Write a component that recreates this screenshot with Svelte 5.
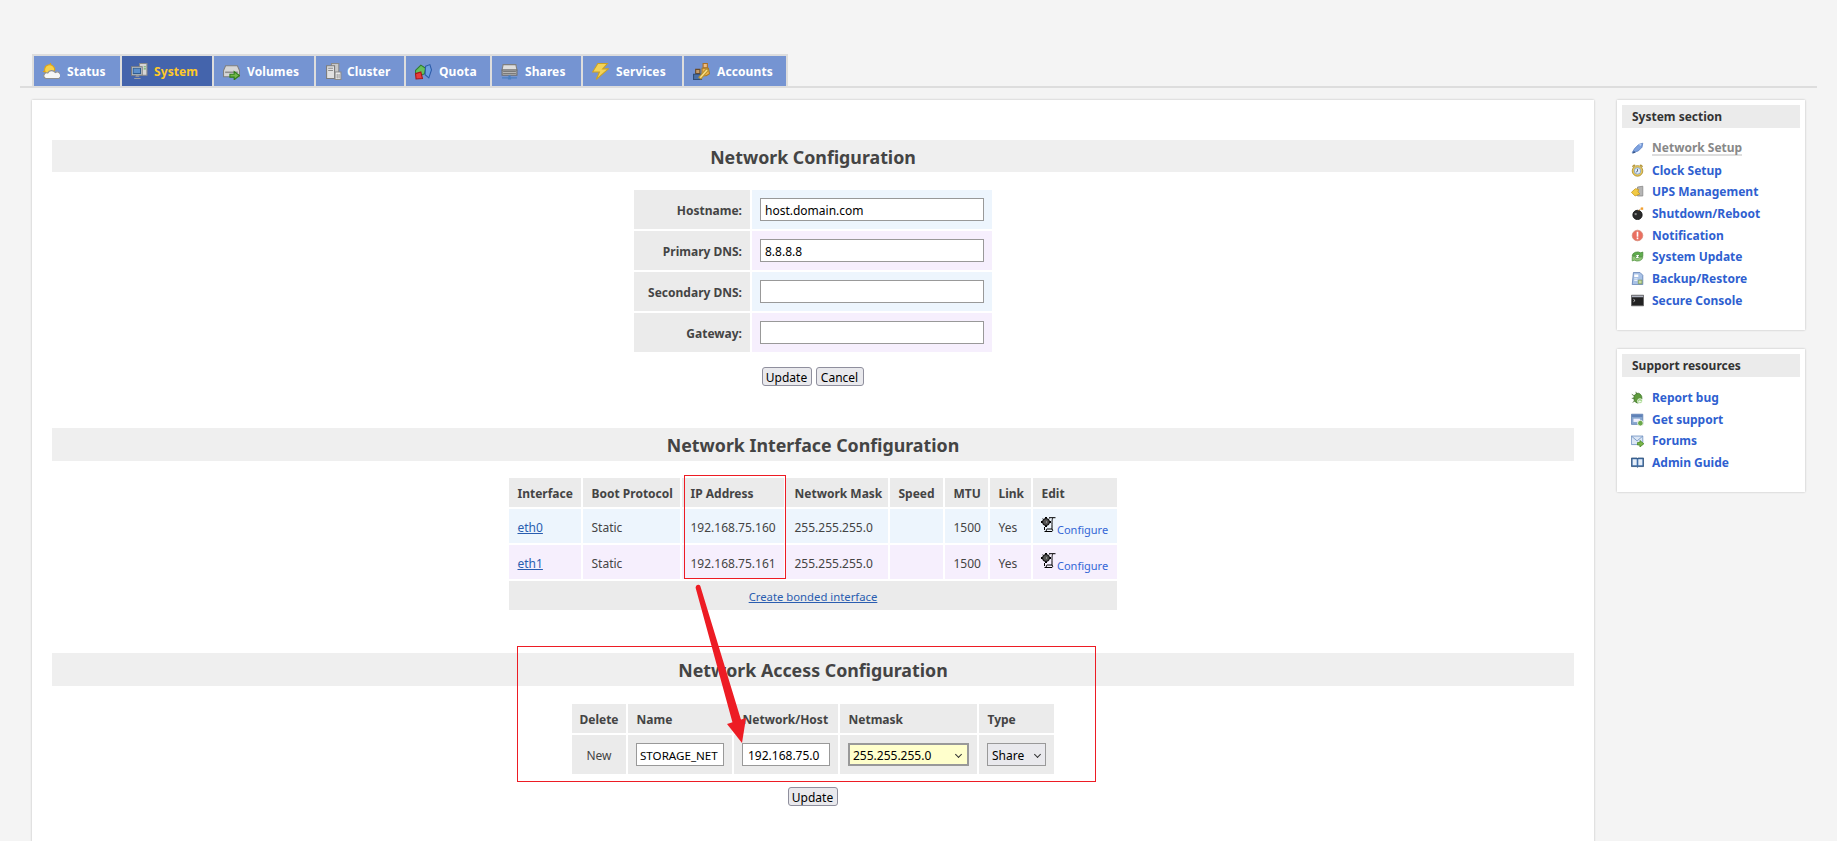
<script>
  const tabs = [
    { n: 'Status', w: 86, g: 7, i: 'status' }, { n: 'System', w: 90, g: 6, i: 'system', on: true },
    { n: 'Volumes', w: 100, g: 7, i: 'volumes' }, { n: 'Cluster', w: 88, g: 5, i: 'cluster' },
    { n: 'Quota', w: 84, g: 7, i: 'quota' }, { n: 'Shares', w: 89, g: 7, i: 'shares' },
    { n: 'Services', w: 99, g: 7, i: 'services' }, { n: 'Accounts', w: 102, g: 7, i: 'accounts' }
  ];
  const sys = [
    ['Network Setup', 'wrench'], ['Clock Setup', 'clock'], ['UPS Management', 'ups'], ['Shutdown/Reboot', 'bomb'],
    ['Notification', 'alert'], ['System Update', 'update'], ['Backup/Restore', 'backup'], ['Secure Console', 'console']
  ];
  const sup = [['Report bug', 'bug'], ['Get support', 'support'], ['Forums', 'forums'], ['Admin Guide', 'guide']];
  const form = [['Hostname:', 'host.domain.com'], ['Primary DNS:', '8.8.8.8'], ['Secondary DNS:', ''], ['Gateway:', '']];
  const heads = ['Interface', 'Boot Protocol', 'IP Address', 'Network Mask', 'Speed', 'MTU', 'Link', 'Edit'];
  const ifaces = [['eth0', '192.168.75.160'], ['eth1', '192.168.75.161']];
  const I = {
    status: [['M2 3l2 2M7 0v3M0 8h3', 'none', '#e0a010'], ['M3 10a4.8 4.8 0 1 1 8-3l-4 4z', '#f8d24a', '#dca318'], ['M2.5 14.5a2.6 2.6 0 0 1 2-5 4 4 0 0 1 7-.5 2.9 2.9 0 0 1 3.5 5.5z', '#f6f6f6', '#8f8f8f']],
    system: [['M8 .5h7v11H8z', '#d6d6d6', '#8a8a8a'], ['M.5 3.5h10v8H.5z', '#e5e5e5', '#7a7a7a'], ['M2 5h7v5H2z', '#5c8fcc', '#2f5c90'], ['M4 13h4l-1-1.5H5zM3 14h6v1H3z', '#a0a0a0', 'none'], ['M12 3h2v1h-2zM12 5h2v1h-2z', '#6ab56a', 'none']],
    volumes: [['M.5 7l2-4.5h11l2 4.5v6H.5z', '#d6d6d6', '#7f7f7f'], ['M2 8h12v1.5H2z', '#8f8f8f', 'none'], ['M6.5 10.5h4V8l5 3.8-5 4v-2.5h-4z', '#74b84a', '#2e7d1a']],
    cluster: [['M6 .5h7v11H6z', '#c8c8c8', '#8a8a8a'], ['M1.5 2.5h7.5v12H1.5z', '#e0e0e0', '#7a7a7a'], ['M3 4.5h4.5v1H3zM3 6.5h4.5v1H3z', '#8c8c8c', 'none'], ['M9.5 8.5h5.5v7H9.5z', '#f5f5f5', '#8a8a8a'], ['M11 10h.8v4.5H11zM12.8 10h.8v4.5h-.8z', '#777', 'none']],
    quota: [['M.5 7l5-5 4.5 3-1 5-4 2-4.5-1z', '#66bf5c', '#2f7a2f'], ['M.5 10l5-1.5 1.5 6-6 .5z', '#e83b3b', '#a61515'], ['M10 3l4-1.5 1.5 5-2.5 7.5-3.5-3z', '#6c9fe2', '#2c5ba8']],
    shares: [['M2 1.5h12l1 5H1z', '#dedede', '#7f7f7f'], ['M1 6.5h14v5H1z', '#b5b5b5', '#6e6e6e'], ['M2 8h12M2 9.8h12', 'none', '#7a7a7a'], ['M7 11.5h2v2h6v1H9.5v1h-3v-1H1v-1h6z', '#4a7fc0', 'none']],
    services: [['M5.5.5h9L10 5.5h5.5L4 15.5l3-7H.5z', '#f4d357', '#cba122']],
    accounts: [['M9.5.5h4v4h-4z', '#f0bd80', '#a96f24'], ['M8.5 5h6l1 5-3 2h-4z', '#f0b44f', '#a97a20'], ['M2.5 6h4v4h-4z', '#c49a6a', '#6b4a26'], ['M.5 10.5h7.5v5H.5z', '#4a6fa6', '#2f4d78'], ['M5.5 13.5l7-8 2 1.5-7 8z', '#f7dd86', '#b8922f']],
    wrench: [['M1.5 13l3-5 5-5 5-1.5-1 5-4.5 4.5z', '#7ea2e0', '#5a7fc0'], ['M1.5 14.5l2-3.5 2.5 2z', '#36558a', 'none'], ['M9 3l4-1-1 3z', '#b9cff2', 'none']],
    clock: [['M2 3.5a2 2 0 0 1 3-2zM14 3.5a2 2 0 0 0-3-2z', '#d9a820', '#a98a2e'], ['M8 2a6.5 6.5 0 1 1 0 13 6.5 6.5 0 0 1 0-13z', '#e8c85a', '#a98a2e'], ['M8 4.5a4 4 0 1 1 0 8 4 4 0 0 1 0-8z', '#dfeafa', '#7a9fc8'], ['M8 6v3l-2 1', 'none', '#456']],
    ups: [['M8 2.5l6.5-1v12H8z', '#b5b5b5', '#8a8a8a'], ['M.5 9l5-4.5 4 1-1 3 2.5 2.5-6 2.5z', '#f2ca44', '#c89a20']],
    bomb: [['M8 4a5.7 5.7 0 1 1 0 11.5A5.7 5.7 0 0 1 8 4z', '#2a2a2a', '#111'], ['M9 5l3-3', 'none', '#c83'], ['M12 .5h3v3h-3z', '#f3a030', 'none'], ['M4.5 7.5H7V10H4.5z', '#8a8a8a', 'none']],
    alert: [['M8 1.5a6.5 6.5 0 1 1 0 13 6.5 6.5 0 0 1 0-13z', '#ea6f60', '#d88a78'], ['M7 3.5h2v6H7zM7 10.5h2v2H7z', '#fff', 'none']],
    update: [['M1.5 7a6.5 5 0 0 1 10.5-3.5l2.5-1V8H9l2-1.7a3.5 3 0 0 0-5.7 1z', '#5fae4d', '#4a8a3a'], ['M14.5 9A6.5 5 0 0 1 4 12.5l-2.5 1V8H7L5 9.7a3.5 3 0 0 0 5.7-1z', '#93c678', '#5a9a4a']],
    backup: [['M3 .5h8L14.500 4v11.500h-13z', '#a9c2e6', '#5f7fb5'], ['M4 3h5v3H4zM4 8h4v1H4zM4 10h4v1H4z', '#fff', 'none'], ['M9 10h4.500v4.500H9z', '#c6dc9f', '#7f9a5a']],
    console: [['M.5 1.500h15v13H.5z', '#222', '#666'], ['M1 2h14v2H1z', '#b0b4c0', 'none'], ['M3 6.500l2 1.500-2 1.500', 'none', '#ddd']],
    bug: [['M7 3a5 6 0 1 1-1 11 5 6 0 0 1 1-11z', '#5f9a3c', '#3f7a2c'], ['M1 4l3 2M1 9h3M2 14l3-2M6 1l1 3', 'none', '#476c2c'], ['M11 9.500a3 3 0 1 1 .1 6 3 3 0 0 1-.1-6z', '#8c6', '#fff'], ['M10.500 11h1v1.500H13v1h-1.500V15h-1v-1.500H9v-1h1.500z', '#fff', 'none']],
    support: [['M.5 1.500h14V14H.5z', '#8aa8d0', '#5f7fb0'], ['M1 2h13v3H1z', '#5f82b8', 'none'], ['M3 7h8v4H3z', '#eef', 'none'], ['M11.500 9a3.500 3.500 0 1 1 .1 7 3.500 3.500 0 0 1-.1-7z', '#6ba84a', '#fff']],
    forums: [['M.5 2.500h14V13H.5z', '#dbe6f5', '#6e90c0'], ['M.5 2.500l7 6 7-6', 'none', '#6e90c0'], ['M8 10.500h3V8l4.800 4-4.800 4v-2.500H8z', '#7ab648', '#4b8a2a']],
    guide: [['M.5 2.500h7l.5 1 .5-1h7V13H9l-1 1-1-1H.5z', '#3f6ea8', '#2f4f78'], ['M2 4h5v7.500H2zM9 4h5v7.500H9z', '#e6eef8', 'none']],
    config: [['M5 1.500a3.500 3.500 0 1 1 0 7 3.500 3.500 0 0 1 0-7z', '#555', '#000'], ['M4 0h2v1.500H4zM0 4h1.500v2H0zM8.500 4H10v2H8.500zM4 8.500h2V10H4zM1 1l1.500 1L2 2.500zM9 1L7.500 2 8 2.500z', '#000', 'none'], ['M5 4.500h1v1H5z', '#ccc', 'none'], ['M8 .7h6.500M12 .7C11 2 11 4 11 9v3.500M3.500 10v3M3.500 14.500h7.500a1.500 1.500 0 0 0 0-2.500H6c-1 0-1 2.500 0 2.500', 'none', '#000']]
  };
</script>

{#snippet icon(name, cls)}
  <svg class={cls} viewBox="0 0 16 16" aria-hidden="true">
    {#each I[name] as p}
      <path d={p[0]} fill={p[1]} stroke={p[2]} stroke-width="1" />
    {/each}
  </svg>
{/snippet}

<div class="page">
  <nav class="tabs">
    {#each tabs as t}
      <a class="tab" class:on={t.on} href="#t" style:width="{t.w}px" style:gap="{t.g}px">
        {@render icon(t.i, 'ti')}<span>{t.n}</span>
      </a>
    {/each}
  </nav>
  <div class="rule"></div>

  <div class="layout">
    <main class="panel">
      <section class="s1">
        <h2>Network Configuration</h2>
        <table class="t form">
          <tbody>
            {#each form as r, i}
              <tr class={i % 2 ? 'odd' : 'even'}>
                <th>{r[0]}</th>
                <td><input class="box wide" value={r[1]} /></td>
              </tr>
            {/each}
          </tbody>
        </table>
        <div class="btns"><button>Update</button><button class="cancel">Cancel</button></div>
      </section>

      <section class="s2">
        <h2>Network Interface Configuration</h2>
        <table class="t ifs">
          <thead><tr>{#each heads as h}<th>{h}</th>{/each}</tr></thead>
          <tbody>
            {#each ifaces as r, i}
              <tr class={i % 2 ? 'odd' : 'even'}>
                <td><a href="#e">{r[0]}</a></td>
                <td>Static</td>
                <td>{r[1]}</td>
                <td>255.255.255.0</td>
                <td></td>
                <td>1500</td>
                <td>Yes</td>
                <td class="edit">{@render icon('config', 'ci')}<a class="plain" href="#c">Configure</a></td>
              </tr>
            {/each}
            <tr class="foot"><td colspan="8"><a href="#b">Create bonded interface</a></td></tr>
          </tbody>
        </table>
      </section>

      <section class="s3">
        <h2>Network Access Configuration</h2>
        <table class="t acc">
          <thead><tr><th class="ctr">Delete</th><th>Name</th><th>Network/Host</th><th>Netmask</th><th>Type</th></tr></thead>
          <tbody>
            <tr>
              <td class="ctr">New</td>
              <td><input class="box w88 nm" value="STORAGE_NET" /></td>
              <td><input class="box w88 pad" value="192.168.75.0" /></td>
              <td><span class="sel mask">255.255.255.0<i class="chev"></i></span></td>
              <td><span class="sel type">Share<i class="chev"></i></span></td>
            </tr>
          </tbody>
        </table>
        <div class="btns b3"><button>Update</button></div>
      </section>
    </main>

    <aside class="side">
      <div class="card c1">
        <h3>System section</h3>
        <ul>
          {#each sys as l, i}
            <li>{@render icon(l[1], 'si')}<a href="#s" class:cur={i === 0}>{l[0]}</a></li>
          {/each}
        </ul>
      </div>
      <div class="card c2">
        <h3>Support resources</h3>
        <ul>
          {#each sup as l}
            <li>{@render icon(l[1], 'si')}<a href="#s">{l[0]}</a></li>
          {/each}
        </ul>
      </div>
    </aside>
  </div>

  <div class="mark m1"></div>
  <div class="mark m2"></div>
  <svg class="arrow" viewBox="0 0 1837 841" aria-hidden="true">
    <path d="M695.600 587.700 Q696 584.500 698.500 584.700 Q700.300 585 700.400 586.300 L741.300 720.700 L732.700 723.300 Z" fill="#ed1c24" />
    <path d="M742 743 L727 724 L746 718 Z" fill="#ed1c24" />
  </svg>
</div>

<style>
  :global(body) { margin: 0; background: #f4f4f4; }
  .page {
    position: relative; height: 841px; overflow: hidden; padding-top: 54px; box-sizing: border-box;
    font: 12px "Noto Sans", "Open Sans", sans-serif; color: #444;
  }
  .tabs { display: flex; gap: 2px; width: fit-content; margin-left: 32px; padding: 2px 2px 0; background: #ddd; }
  .tab {
    display: flex; align-items: center; box-sizing: border-box; height: 30px; padding-left: 9px;
    background: #7594d2; color: #fff; font-weight: 700; letter-spacing: .1px; text-decoration: none; white-space: nowrap;
  }
  .tab.on { background: #4464ac; color: #ffc929; }
  .ti { width: 17px; height: 17px; flex: none; }
  .rule { height: 2px; background: #ddd; margin: 0 20px; }
  .layout { display: flex; align-items: flex-start; padding: 12px 0 0 32px; }
  .panel {
    width: 1562px; box-sizing: border-box; min-height: 800px; padding: 40px 20px 0; background: #fff;
    box-shadow: 0 0 2px #bbb;
  }
  h2 {
    margin: 0; height: 32px; line-height: 34px; text-align: center; background: #efefef; color: #444;
    font-size: 17.8px; font-weight: 700;
  }
  .s2 h2, .s3 h2 { height: 33px; }
  .t { border-collapse: separate; border-spacing: 2px; margin: 0 auto; table-layout: fixed; }
  .t th, .t td { box-sizing: border-box; padding: 0; }
  .t th { background: #ebebeb; font-weight: 700; text-align: left; padding: 2px 0 0 8.5px; }
  .even td { background: #edf5fd; }
  .odd td { background: #f6effd; }
  .form { margin-top: 16px; }
  .form th { width: 116px; height: 39px; text-align: right; padding: 1px 8px 0 0; }
  .form td { width: 240px; padding-left: 8px; }
  .box {
    display: block; box-sizing: border-box; height: 23px; border: 1px solid #999; border-radius: 0; padding: 1px 4px 0;
    background: #fff; color: #000; font: 12px "Noto Sans", sans-serif; outline: none;
  }
  .wide { width: 224px; }
  .w88 { width: 88px; }
  .nm { padding: 1px 2px 0 3px; font-size: 11.6px; }
  .pad { padding-left: 5px; }
  .btns { display: flex; justify-content: center; gap: 4px; margin-top: 13px; padding-right: 1px; }
  button {
    box-sizing: border-box; width: 50px; height: 19px; padding: 1px 0 0; border: 1px solid #8f8f9d; border-radius: 3px;
    background: #e9e9ed; color: #000; font: 12px "Noto Sans", sans-serif;
  }
  .cancel { width: 48px; }
  .s2 { margin-top: 42px; }
  .ifs { margin-top: 15px; }
  .ifs th { height: 29px; }
  .ifs th:nth-child(1) { width: 72px; }
  .ifs th:nth-child(2) { width: 97px; }
  .ifs th:nth-child(3) { width: 102px; }
  .ifs th:nth-child(4) { width: 102px; }
  .ifs th:nth-child(5) { width: 53px; }
  .ifs th:nth-child(6) { width: 43px; }
  .ifs th:nth-child(7) { width: 41px; }
  .ifs th:nth-child(8) { width: 84px; }
  .ifs tbody td { height: 34px; padding: 2px 0 0 8.5px; }
  .ifs tbody td.edit { padding: 0 0 0 8px; }
  .ifs a { color: #2a5db0; }
  .ifs .plain { color: #3366d6; font-size: 11px; text-decoration: none; position: relative; top: 2px; }
  .edit { white-space: nowrap; }
  .ci { width: 16px; height: 16px; vertical-align: -1px; }
  .foot td { height: 29px !important; background: #ebebeb; text-align: center; padding: 1px 0 0 !important; }
  .foot a { font-size: 11.3px; }
  .s3 { margin-top: 41px; }
  .acc { margin-top: 16px; }
  .acc th { height: 29px; }
  .acc th:nth-child(1) { width: 54px; }
  .acc th:nth-child(2) { width: 104px; }
  .acc th:nth-child(3) { width: 104px; }
  .acc th:nth-child(4) { width: 137px; }
  .acc th:nth-child(5) { width: 75px; }
  .acc td { height: 39px; background: #ebebeb; padding-left: 8px; }
  .t .ctr { text-align: center; padding-left: 0; }
  .acc td.ctr { padding-top: 2px; }
  .sel {
    display: flex; align-items: center; justify-content: space-between; box-sizing: border-box; height: 23px;
    padding: 1px 5px 0 4px; color: #000; border: 1px solid #999;
  }
  .mask { width: 121px; background: #ffc; border-width: 2px; padding-left: 3px; padding-right: 6px; }
  .type { width: 59px; background: #e9e9ed; }
  .chev { width: 4px; height: 4px; border: solid #333; border-width: 0 1px 1px 0; transform: rotate(45deg); margin-top: -2px; }
  .b3 { margin-top: 11px; }
  .side { width: 188px; margin-left: 23px; flex: none; }
  .card { background: #fff; box-shadow: 0 0 2px #bbb; padding: 5px 5px 0; box-sizing: border-box; }
  .c1 { height: 230px; }
  .c2 { height: 143px; margin-top: 19px; }
  h3 { margin: 0; height: 23px; line-height: 23px; padding-left: 10px; background: #ebebeb; font-size: 12px; font-weight: 700; color: #333; }
  ul { list-style: none; margin: 9.5px 0 0; padding: 0 0 0 9px; }
  li { display: flex; align-items: center; gap: 8px; height: 21.7px; }
  .si { width: 13px; height: 13px; flex: none; }
  li a { color: #2f5fd0; font-weight: 700; text-decoration: none; }
  li a.cur { color: #888; border-bottom: 2px solid #ddd; line-height: 13px; }
  .mark { position: absolute; box-sizing: border-box; border: 1px solid #ed1c24; }
  .m1 { left: 684px; top: 475px; width: 102px; height: 104px; }
  .m2 { left: 517px; top: 646px; width: 579px; height: 136px; }
  .arrow { position: absolute; inset: 0; width: 1837px; height: 841px; pointer-events: none; }
</style>
